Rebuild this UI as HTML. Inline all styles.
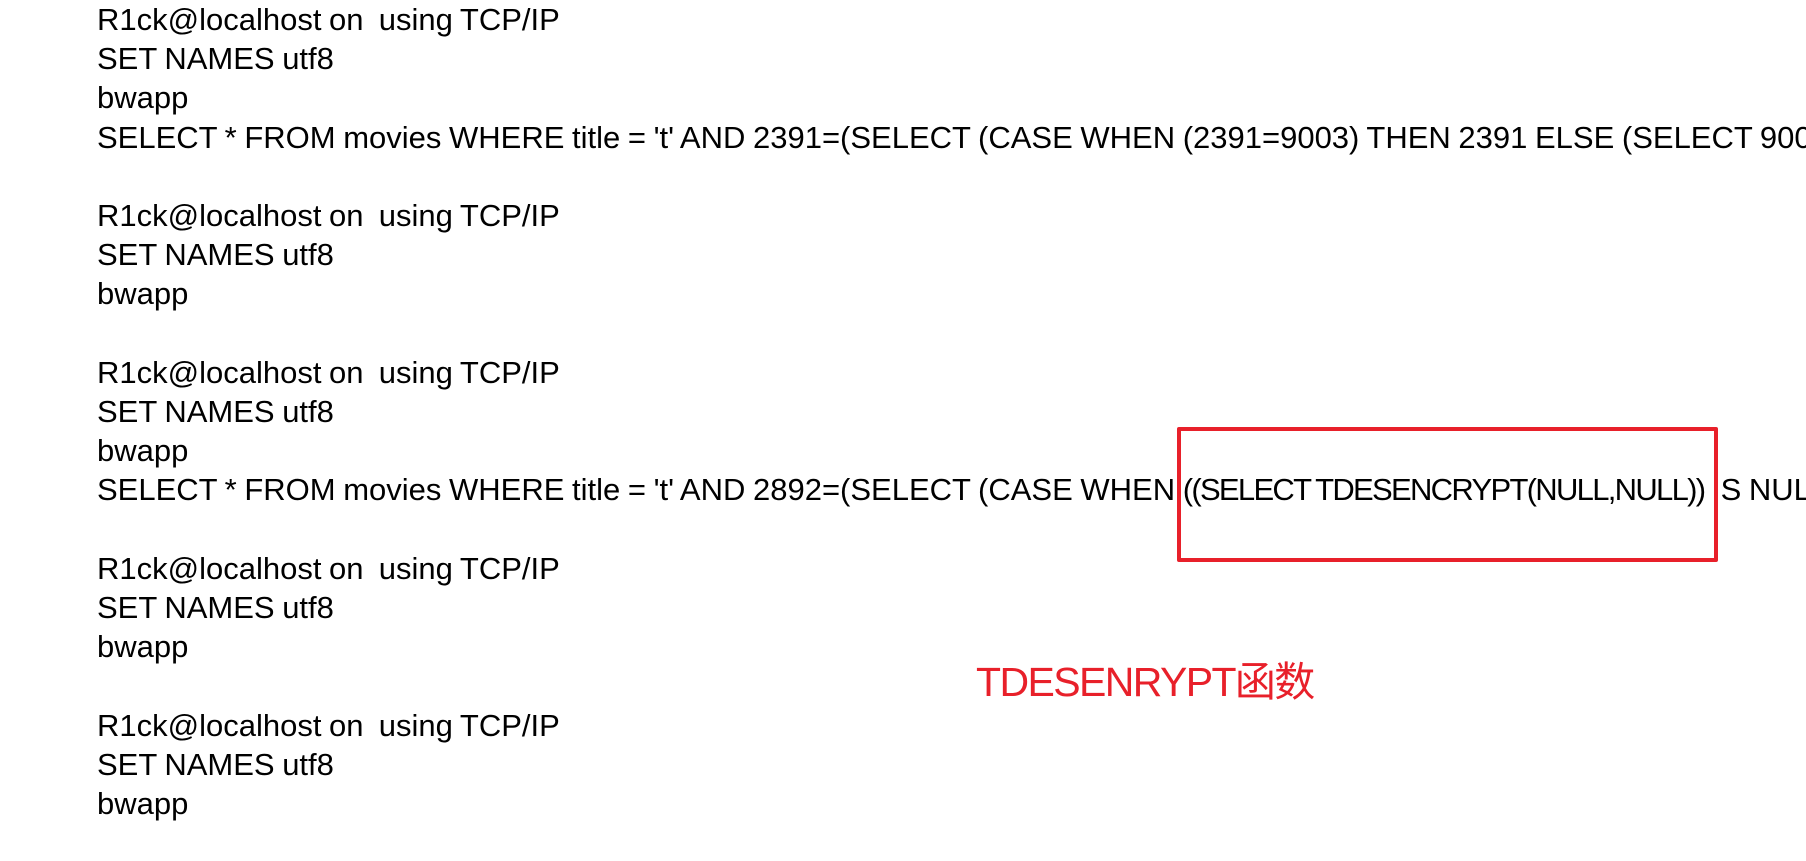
<!DOCTYPE html>
<html><head><meta charset="utf-8"><style>
html,body{margin:0;padding:0;background:#fff;width:1806px;height:861px;overflow:hidden;position:relative}
.t{position:absolute;left:97px;top:0;width:1709px;overflow:hidden;font-family:"Liberation Sans","Noto Sans CJK SC",sans-serif;font-size:31px;line-height:39.2px;color:#000;white-space:pre;word-spacing:-1px}
.c{letter-spacing:-1.7px}
.box{position:absolute;left:1177px;top:427px;width:533px;height:127px;border:4px solid #e8202a;border-radius:2px}
.r{position:absolute;left:976px;top:657px;font-family:"Liberation Sans","Noto Sans CJK SC",sans-serif;font-size:41px;line-height:50px;color:#e8202a;white-space:pre;letter-spacing:-1.6px}
</style></head><body>
<div class="t">R1ck@localhost on  using TCP/IP
SET NAMES utf8
bwapp
SELECT * FROM movies WHERE title = 't' AND 2391=(SELECT (CASE WHEN (2391=9003) THEN 2391 ELSE (SELECT 9003

R1ck@localhost on  using TCP/IP
SET NAMES utf8
bwapp

R1ck@localhost on  using TCP/IP
SET NAMES utf8
bwapp
SELECT * FROM movies WHERE title = 't' AND 2892=(SELECT (CASE WHEN <span class="c">((SELECT TDESENCRYPT(NULL,NULL))</span> IS NULL

R1ck@localhost on  using TCP/IP
SET NAMES utf8
bwapp

R1ck@localhost on  using TCP/IP
SET NAMES utf8
bwapp</div>
<div class="box"></div>
<div class="r">TDESENRYPT函数</div>
</body></html>
